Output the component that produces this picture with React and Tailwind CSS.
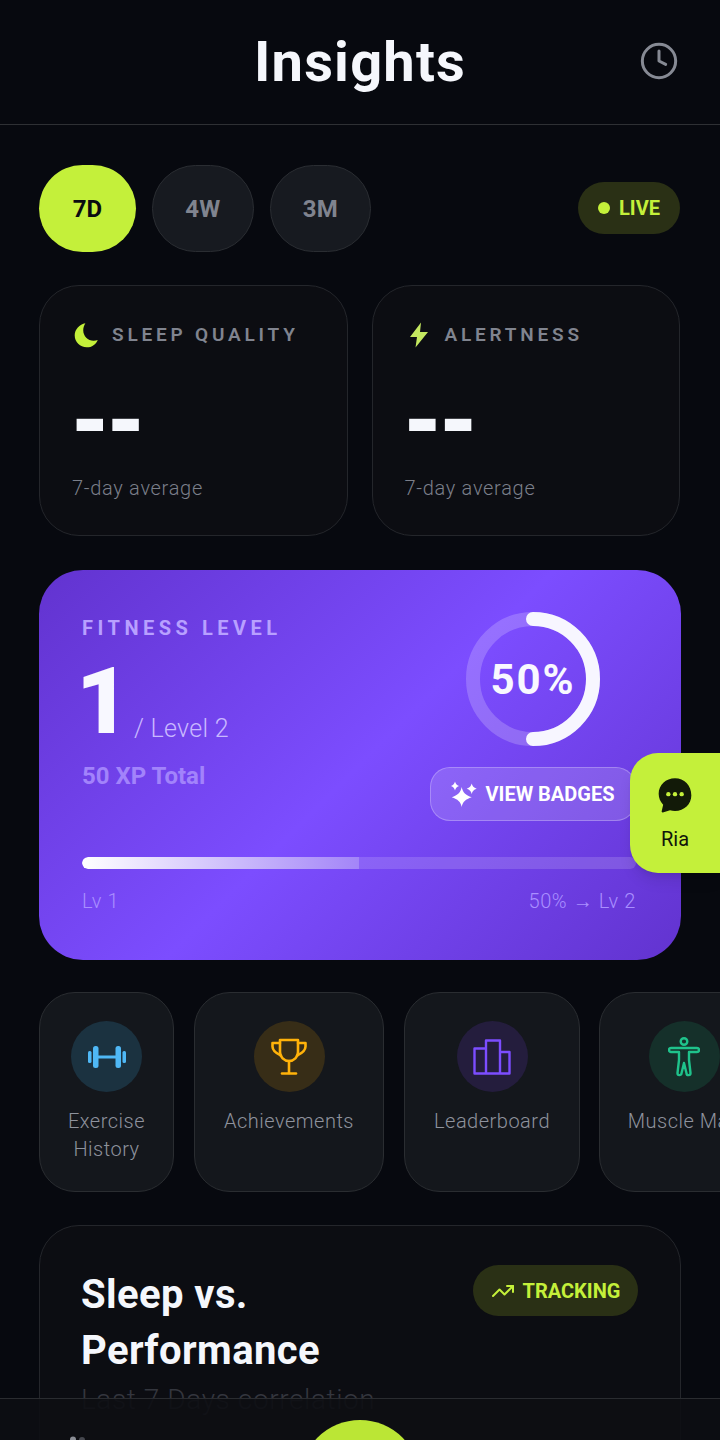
import React from 'react';
import { Clock, TrendingUp } from 'lucide-react';

const Moon = () => (
  <svg width="27" height="27" viewBox="0 0 24 24" fill="#c4f03a">
    <path d="M11 1C5.800 2 1.500 6.300 1.500 11.800 1.500 17.700 6.300 22.500 12.200 22.500c4.600 0 8.300-2.700 9.800-6.600-1.100.5-2.400.7-3.600.7-5.200 0-9.300-4.100-9.300-9.300C9.100 5 9.700 3 11 1z" />
  </svg>
);

const Bolt = () => (
  <svg width="20" height="26" viewBox="0 0 20 26" fill="#c4e860">
    <path d="M12 0.500 1 15h7l-1.500 10.500L19 10h-8z" />
  </svg>
);

const ChatBubble = () => (
  <svg width="40" height="40" viewBox="0 0 24 24">
    <path d="M12 2C6.500 2 2.200 6.100 2.200 11.300c0 2.500 1 4.800 2.700 6.500L4 21.800c-.1.500.3.800.7.700l4.300-1.300c1 .3 2 .4 3 .4 5.500 0 9.800-4.200 9.800-9.300C21.800 6.100 17.500 2 12 2z" fill="#121a08" />
    <circle cx="8" cy="11.500" r="1.300" fill="#c4f03a" />
    <circle cx="12" cy="11.500" r="1.300" fill="#c4f03a" />
    <circle cx="16" cy="11.500" r="1.300" fill="#c4f03a" />
  </svg>
);

const Stars = () => (
  <svg width="26" height="26" viewBox="0 0 26 26" fill="#ffffff">
    <path d="M10.700 6c1.200 5.600 3.800 8.200 10 10.300-6.200 2-8.800 4.500-10 9.700-1.200-5.200-3.800-7.700-10-9.700 6.200-2.100 8.800-4.700 10-10.300z" />
    <path d="M4 0.500c.6 2.400 1.600 3.500 4 4.500-2.400 1-3.400 2.100-4 4.500-.6-2.400-1.600-3.500-4-4.500 2.400-1 3.400-2.100 4-4.500z" />
    <path d="M20.700 2.500c.7 2.800 2 4.200 5 5.200-3 1-4.300 2.400-5 5.200-.7-2.800-2-4.200-5-5.200 3-1 4.300-2.400 5-5.200z" />
  </svg>
);

const Barbell = () => (
  <svg width="38" height="24" viewBox="0 0 38 24" fill="#4fb8f5">
    <rect x="0" y="6" width="3.500" height="12" rx="1.500" />
    <rect x="5" y="1" width="5.500" height="22" rx="2.500" />
    <rect x="10" y="10.500" width="18" height="3" />
    <rect x="27.500" y="1" width="5.500" height="22" rx="2.500" />
    <rect x="34.500" y="6" width="3.500" height="12" rx="1.500" />
  </svg>
);

const Cup = () => (
  <svg width="36" height="38" viewBox="0 0 36 38" fill="none" stroke="#ffb20a" strokeWidth="2.600" strokeLinecap="round" strokeLinejoin="round">
    <path d="M9 2h18v12c0 5-4 9-9 9s-9-4-9-9z" />
    <path d="M9 5H1.500v3.500c0 4 3 6.500 8.500 9" />
    <path d="M27 5h7.500v3.500c0 4-3 6.500-8.500 9" />
    <path d="M18 23v12" />
    <path d="M11 35.500h14" />
  </svg>
);

const Podium = () => (
  <svg width="38" height="36" viewBox="0 0 38 36" fill="none" stroke="#7c4dff" strokeWidth="2.400" strokeLinejoin="round">
    <path d="M1.500 9.500h11.500V34.500H1.500zM13 1.500h14V34.500H13zM27 13h9.500V34.500H27z" />
  </svg>
);

const Body = () => (
  <svg width="32" height="40" viewBox="0 0 32 40" fill="none" stroke="#1fc28b" strokeWidth="2.400" strokeLinejoin="round">
    <circle cx="16" cy="4.500" r="3.300" />
    <path d="M3 11h26a2 2 0 0 1 0 4h-8v8l1.500 13a2 2 0 0 1-4 .3L16 26l-2.500 10.300a2 2 0 0 1-4-.3L11 23v-8H3a2 2 0 0 1 0-4z" />
  </svg>
);

const RangeTab = ({ label, active }) => (
  <button
    className={
      active
        ? 'w-[97px] h-[87px] rounded-full bg-[#c4f03a] text-[#0a0c10] font-bold text-[24px]'
        : 'w-[101.5px] h-[87px] rounded-full bg-[#171a20] border border-[#2a2d32] text-[#80848f] font-bold text-[24px]'
    }
  >
    {label}
  </button>
);

const StatCard = ({ icon, label }) => (
  <div className="flex-1 h-[251px] rounded-[40px] bg-[#0c0d12] border border-[#24262b] pl-[32px] pt-[34px]">
    <div className="flex items-center gap-[12px] h-[30px]">
      <span className="w-[28px] flex justify-center">{icon}</span>
      <span className="text-[19px] font-semibold tracking-[3.800px] text-[#80848f]">{label}</span>
    </div>
    <div className="mt-[42px] h-[56px] font-['DejaVu_Sans',sans-serif] font-bold text-[86px] leading-[56px] text-[#f5f7fc]">--</div>
    <div className="mt-[26px] text-[20px] leading-[28px] font-light tracking-[0.700px] text-[#7b7f8a]">7-day average</div>
  </div>
);

const ActionCard = ({ width, circle, icon, children }) => (
  <div className={`${width} shrink-0 h-[200px] rounded-[36px] bg-[#14171c] border border-[#2a2d31] flex flex-col items-center pt-[28px]`}>
    <div className={`w-[71px] h-[71px] rounded-full flex items-center justify-center ${circle}`}>{icon}</div>
    <div className="mt-[15px] text-[20px] leading-[28px] text-center font-light tracking-[0.500px] text-[#8e929c] whitespace-nowrap">{children}</div>
  </div>
);

const App = () => {
  return (
    <div className="relative w-[720px] h-[1440px] overflow-hidden bg-[#07090f] font-['Roboto',sans-serif]">
      {/* Header */}
      <header className="relative h-[125px] border-b border-[#2e3034] flex items-center justify-center">
        <h1 className="text-[56px] font-bold tracking-[1.200px] text-[#f5f7fc] leading-none">Insights</h1>
        <Clock size={40} strokeWidth={1.800} className="absolute right-[41px] top-[41px] text-[#868a94]" />
      </header>

      {/* Range tabs */}
      <div className="flex items-center pl-[39px] pr-[40px] pt-[40px]">
        <div className="flex gap-[16px]">
          <RangeTab label="7D" active />
          <RangeTab label="4W" />
          <RangeTab label="3M" />
        </div>
        <div className="ml-auto -mt-[1px] w-[102px] h-[52px] rounded-full bg-[#2a3015] flex items-center justify-center gap-[9px] text-[#c4f03a] font-bold text-[20px]">
          <span className="w-[12px] h-[12px] rounded-full bg-[#c4f03a]" />
          LIVE
        </div>
      </div>

      {/* Stats */}
      <div className="flex gap-[24px] pl-[39px] pr-[40px] mt-[33px]">
        <StatCard icon={<Moon />} label="SLEEP QUALITY" />
        <StatCard icon={<Bolt />} label="ALERTNESS" />
      </div>

      {/* Fitness level */}
      <section className="mx-[39px] mt-[34px] h-[390px] rounded-[44px] bg-[linear-gradient(135deg,#6233cf_0%,#7c4dff_50%,#6233cf_100%)] pl-[43px] pr-[45px] pt-[46px]">
        <div className="flex justify-between">
          <div>
            <div className="text-[20px] leading-[24px] font-bold tracking-[4.500px] text-[#b8a0ff]">FITNESS LEVEL</div>
            <div className="flex items-end mt-[14px]">
              <span className="-ml-[6px] text-[93px] leading-[96px] font-black text-[#f8f8ff]">1</span>
              <span className="ml-[4px] mb-[7px] text-[25px] leading-[28px] font-light tracking-[0.300px] text-[#c9b8ff]">/ Level 2</span>
            </div>
            <div className="mt-[11px] text-[24px] leading-[30px] font-bold text-[#a283fb]">50 XP Total</div>
          </div>
          <div className="flex flex-col items-center">
            <div className="relative w-[134px] h-[134px] -mt-[4px] flex items-center justify-center">
              <svg width="134" height="134" viewBox="0 0 134 134" className="absolute inset-0">
                <circle cx="67" cy="67" r="60" fill="none" stroke="#ffffff" strokeOpacity="0.2" strokeWidth="14" />
                <path d="M67 7a60 60 0 0 1 0 120" fill="none" stroke="#f7f6ff" strokeWidth="14" strokeLinecap="round" />
              </svg>
              <span className="text-[42px] tracking-[2px] font-bold text-[#f8f8ff]">50%</span>
            </div>
            <button className="mt-[21px] w-[206px] h-[54px] rounded-[20px] bg-white/15 border border-white/25 flex items-center justify-center gap-[8px] text-white font-bold text-[20px]">
              <Stars />
              VIEW BADGES
            </button>
          </div>
        </div>
        <div className="mt-[36px] h-[12px] rounded-full bg-white/15 overflow-hidden">
          <div className="h-full w-1/2 rounded-l-full bg-[linear-gradient(90deg,#ffffff,#a385f8)]" />
        </div>
        <div className="mt-[20px] flex justify-between text-[20px] leading-[24px] font-light tracking-[0.600px] text-[#a98fff]">
          <span>Lv 1</span>
          <span>50% → Lv 2</span>
        </div>
      </section>

      {/* Floating assistant tab */}
      <div className="absolute right-0 top-[753px] w-[90px] h-[120px] rounded-l-[28px] bg-[#c4f03a] shadow-lg flex flex-col items-center pt-[22px] z-10">
        <ChatBubble />
        <span className="mt-[12px] text-[20px] leading-[24px] text-[#10160a]">Ria</span>
      </div>

      {/* Shortcuts */}
      <div className="flex gap-[20px] pl-[39px] mt-[32px]">
        <ActionCard width="w-[135px]" circle="bg-[#1b3240]" icon={<Barbell />}>
          Exercise<br />History
        </ActionCard>
        <ActionCard width="w-[190px]" circle="bg-[#372d17]" icon={<Cup />}>
          Achievements
        </ActionCard>
        <ActionCard width="w-[176px]" circle="bg-[#241d3d]" icon={<Podium />}>
          Leaderboard
        </ActionCard>
        <ActionCard width="w-[170px] -ml-[1px]" circle="bg-[#15302a]" icon={<Body />}>
          Muscle Map
        </ActionCard>
      </div>

      {/* Sleep vs performance */}
      <section className="mx-[39px] mt-[33px] h-[400px] rounded-[40px] bg-[#0c0d12] border border-[#24262b] pl-[41px] pr-[42px] pt-[39px] flex justify-between items-start">
        <div>
          <h2 className="mt-[2px] text-[40px] leading-[56px] font-bold tracking-[0.400px] text-[#f5f7fc]">Sleep vs.<br />Performance</h2>
          <div className="mt-[3px] text-[28px] leading-[36px] font-light tracking-[0.600px] text-[#34363e]">Last 7 Days correlation</div>
        </div>
        <div className="w-[165px] h-[51px] rounded-full bg-[#2a3015] flex items-center justify-center gap-[8px] text-[#c4f03a] font-bold text-[20px]">
          <TrendingUp size={24} />
          TRACKING
        </div>
      </section>

      {/* Bottom nav, only the tops of its icons are in view */}
      <nav className="absolute left-0 right-0 bottom-0 h-[42px] bg-[#0d0e13]/90 border-t border-[#2a2c30] z-20">
        <svg width="20" height="4" viewBox="0 0 20 4" className="absolute left-[68px] top-[37px]">
          <circle cx="5" cy="3.500" r="3" fill="#8a8d95" />
          <circle cx="14" cy="4" r="3" fill="#45474e" />
        </svg>
        <div className="absolute left-[300px] top-[21px] w-[120px] h-[120px] rounded-full bg-[#bbe635]" />
      </nav>
    </div>
  );
};

export default App;
